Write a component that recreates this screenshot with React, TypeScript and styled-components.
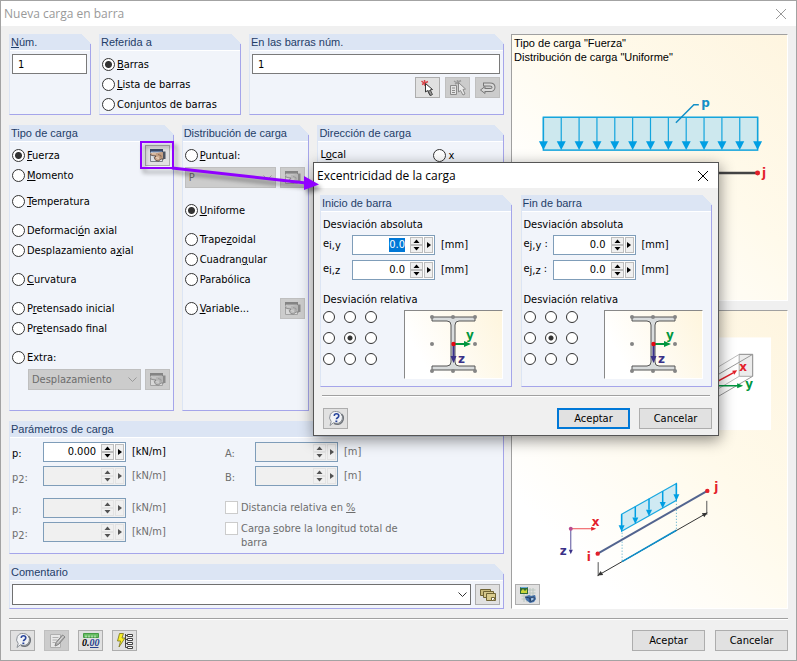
import React from 'react';
import styled, { createGlobalStyle, css } from 'styled-components';

const ui = '"DejaVu Sans Condensed", "Noto Sans", sans-serif';
const arial = '"Liberation Sans", Arial, sans-serif';
const segoe = '"Open Sans", "Noto Sans", sans-serif';

const Global = createGlobalStyle`
  * { box-sizing: border-box; }
  body { margin: 0; background: #f0f0f0; font: 11px/14px ${ui}; color: #000; }
  button, input, select { font: inherit; color: inherit; margin: 0; }
`;

const Page = styled.div`
  position: relative;
  display: flex;
  flex-direction: column;
  min-height: 100vh;
  border: 1px solid #a3a3a3;
  background: #f0f0f0;
`;

const TitleBar = styled.header<{ $active?: boolean }>`
  display: flex;
  align-items: center;
  justify-content: space-between;
  height: 25px;
  padding: 0 9px 0 3px;
  background: #fff;
  color: ${p => (p.$active ? '#000' : '#999')};
  font: 12px/16px ${segoe};
`;

const TitleText = styled.h1`
  margin: 0;
  font: inherit;
`;

const CloseButton = styled.button`
  display: flex;
  padding: 0;
  border: 0;
  background: none;
`;

const Main = styled.main`
  display: grid;
  grid-template-columns: minmax(0, 495fr) minmax(0, 277fr);
  gap: 7px;
  padding: 8px 8px 0;
`;

const Left = styled.div`
  display: flex;
  flex-direction: column;
  gap: 10px;
`;

const TopRow = styled.div`
  display: grid;
  grid-template-columns: 82fr 142fr 255fr;
  gap: 8px;
`;

const LoadRow = styled.div`
  display: grid;
  grid-template-columns: 165fr 128fr 187fr;
  gap: 8px;
`;

const GroupBox = styled.fieldset`
  position: relative;
  display: flex;
  flex-direction: column;
  min-width: 0;
  margin: 0;
  padding: 0;
  border: 0;
  border-left: 1px solid #dce5f4;
  border-bottom: 1px solid #a5a5ea;
  background: #f1f4fa;
  &::after {
    content: '';
    position: absolute;
    top: 10px;
    right: 0;
    bottom: 0;
    width: 1px;
    background: #a5a5ea;
  }
`;

const GroupHead = styled.div`
  height: 17px;
  padding-left: 1px;
  border-bottom: 1px solid #fff;
  background: linear-gradient(225deg, #f0f0f0 7px, #dce5f4 7px);
  color: #1f3d68;
  font: 11px/16px ${arial};
  white-space: nowrap;
`;

const GroupBody = styled.div<{ $minHeight?: number }>`
  display: flex;
  flex-direction: column;
  padding: 3px 4px 0 2px;
  min-height: ${p => p.$minHeight ?? 0}px;
`;

const TextBox = styled.input`
  width: 100%;
  height: 20px;
  padding: 0 5px;
  border: 1px solid #7a7a7a;
  background: #fff;
`;

const ButtonRow = styled.div`
  display: flex;
  justify-content: flex-end;
  gap: 5px;
  margin-top: 3px;
`;

const IconButton = styled.button<{ $end?: boolean }>`
  display: flex;
  flex: none;
  align-items: center;
  justify-content: center;
  width: 25px;
  height: 21px;
  padding: 0;
  border: 1px solid #adadad;
  background: #e1e1e1;
  ${p => p.$end && css`margin-left: auto;`}
  &:disabled { background: #cccccc; border-color: #bfbfbf; }
  &:disabled svg { filter: grayscale(1); opacity: 0.55; }
`;

const PushButton = styled.button<{ $default?: boolean }>`
  width: 73px;
  height: 21px;
  padding: 0;
  border: ${p => (p.$default ? '2px solid #0078d7' : '1px solid #adadad')};
  background: #e1e1e1;
`;

const RadioGroup = styled.div<{ $gap?: number }>`
  display: flex;
  flex-direction: column;
  margin-top: ${p => p.$gap ?? 0}px;
`;

const RadioRow = styled.div`
  display: flex;
  align-items: center;
  height: 20px;
`;

const RadioLabel = styled.label`
  display: flex;
  align-items: center;
  gap: 2px;
  white-space: nowrap;
  & > span { padding-top: 2px; }
`;

const Dot = styled.input<{ $small?: boolean }>`
  appearance: none;
  flex: none;
  width: ${p => (p.$small ? 12 : 13)}px;
  height: ${p => (p.$small ? 12 : 13)}px;
  border: 1px solid #333;
  border-radius: 50%;
  background: #fff;
  &:checked {
    background: radial-gradient(circle, #333 ${p => (p.$small ? 2 : 3)}px, #fff ${p => (p.$small ? 3 : 4)}px);
  }
`;

const SelectRow = styled.div<{ $indent?: boolean; $top: number }>`
  display: flex;
  align-items: center;
  gap: 4px;
  margin-top: ${p => p.$top}px;
  padding-left: ${p => (p.$indent ? 16 : 0)}px;
`;

const SelectWrap = styled.div`
  position: relative;
  flex: 1;
  min-width: 0;
  & > svg { position: absolute; right: 4px; top: 7px; pointer-events: none; }
`;

const Select = styled.select`
  appearance: none;
  display: block;
  width: 100%;
  height: 21px;
  padding: 0 3px;
  border: 1px solid #707070;
  border-radius: 0;
  background: #fff;
  &:disabled { border-color: #bfbfbf; background: #ccc; color: #6d6d6d; opacity: 1; }
`;

const Direction = styled.div`
  display: grid;
  grid-template-columns: 113px 1fr;
  align-items: center;
  height: 20px;
`;

const ParamGrid = styled.div`
  display: grid;
  grid-template-columns: 31px 83px 99px 30px 83px 1fr;
  gap: 4px 0;
  padding-top: 1px;
`;

const ParamSpacer = styled.div`
  grid-column: 1 / -1;
  height: 4px;
`;

const ParamLabel = styled.label<{ $off?: boolean }>`
  padding-top: 5px;
  height: 20px;
  color: ${p => (p.$off ? '#6d6d6d' : '#000')};
`;

const Unit = styled.span<{ $off?: boolean }>`
  padding: 3px 0 0 6px;
  color: ${p => (p.$off ? '#6d6d6d' : '#000')};
`;

const CheckLabel = styled.label`
  display: flex;
  align-items: flex-start;
  gap: 3px;
  max-width: 190px;
  color: #6d6d6d;
`;

const CheckStack = styled.div`
  grid-column: 4 / -1;
  grid-row: span 2;
  display: flex;
  flex-direction: column;
  gap: 7px;
  padding-top: 3px;
  height: 44px;
`;

const CheckBox = styled.input`
  appearance: none;
  flex: none;
  width: 13px;
  height: 13px;
  border: 1px solid #ccc;
  background: #fff;
`;

const Spin = styled.div<{ $off?: boolean }>`
  display: flex;
  width: 83px;
  height: 20px;
  padding: 1px;
  gap: 1px;
  border: 1px solid #7f9db9;
  background: ${p => (p.$off ? '#f0f0f0' : '#fff')};
`;

const SpinInput = styled.input`
  flex: 1;
  min-width: 0;
  padding: 0 4px 0 0;
  border: 0;
  outline: 0;
  background: none;
  text-align: right;
  &::selection { background: #0078d7; color: #fff; }
`;

const SpinPair = styled.div`
  display: flex;
  flex-direction: column;
  width: 13px;
`;

const SpinButton = styled.button<{ $side?: boolean }>`
  display: flex;
  align-items: center;
  justify-content: center;
  flex: ${p => (p.$side ? '0 0 9px' : '1')};
  padding: 0;
  border: 1px solid #bdbdbd;
  background: #f0f0f0;
  &:disabled { border-color: #ddd; opacity: 0.65; }
`;

const Previews = styled.div`
  display: grid;
  grid-template-rows: 267fr 299fr;
  gap: 9px;
`;

const Preview = styled.section`
  position: relative;
  display: flex;
  flex-direction: column;
  min-height: 0;
  border: 1px solid #fff;
  border-top-color: #a0a0a0;
  border-left-color: #a0a0a0;
  background: linear-gradient(45deg, #fff 20%, #fffaeb 60%, #fef5e0);
`;

const Caption = styled.p`
  margin: 0;
  padding: 1px 0 0 2px;
  font: 11px/14px ${arial};
`;

const Drawing = styled.svg`
  display: block;
  width: 100%;
  height: 0;
  flex: 1;
  min-height: 0;
`;

const PreviewTool = styled.div`
  position: absolute;
  left: 3px;
  bottom: 3px;
`;

const Rule = styled.hr<{ $top: number }>`
  height: 2px;
  margin: ${p => p.$top}px 8px 0;
  border: 0;
  border-top: 1px solid #a0a0a0;
  border-bottom: 1px solid #fff;
`;

const Footer = styled.footer`
  display: flex;
  justify-content: space-between;
  padding: 10px 8px 9px 9px;
`;

const Cluster = styled.div<{ $tools?: boolean }>`
  display: flex;
  gap: ${p => (p.$tools ? 9 : 10)}px;
`;

const Dialog = styled.div`
  position: absolute;
  left: 312px;
  top: 161px;
  width: 406px;
  border: 1px solid #555;
  background: #f0f0f0;
  box-shadow: 1px 4px 14px rgba(0, 0, 0, 0.45);
`;

const DialogMain = styled.div`
  display: grid;
  grid-template-columns: 1fr 1fr;
  gap: 9px;
  padding: 7px 6px 0;
`;

const Heading = styled.p`
  margin: 0;
  padding: 3px 0 2px;
`;

const OffsetGrid = styled.div`
  display: grid;
  grid-template-columns: 29px 83px 1fr;
  row-gap: 5px;
  padding-top: 1px;
  margin-bottom: 10px;
`;

const OffsetLabel = styled.label`
  padding-top: 2px;
  white-space: nowrap;
`;

const Sub = styled.span`
  position: relative;
  top: 2px;
`;

const RelRow = styled.div`
  display: flex;
  justify-content: space-between;
  padding: 1px 5px 7px 0;
`;

const Nine = styled.div`
  display: grid;
  grid-template-columns: repeat(3, 12px);
  grid-auto-rows: 12px;
  gap: 9px;
  padding-top: 1px;
`;

const SectionPicture = styled.div`
  width: 99px;
  height: 69px;
  border: 1px solid #fff;
  border-top-color: #888;
  border-left-color: #888;
  background: linear-gradient(60deg, #fff 20%, #fef5dd);
`;

const DialogFooter = styled.footer`
  display: flex;
  justify-content: space-between;
  padding: 11px 6px 6px 9px;
`;

const Pointer = styled.svg`
  position: absolute;
  left: 135px;
  top: 137px;
  pointer-events: none;
  filter: drop-shadow(3px 4px 2px rgba(0, 0, 0, 0.4));
`;

const CloseIcon = ({ color }: { color: string }) => (
  <svg width="12" height="12" viewBox="0 0 12 12" aria-hidden="true">
    <path d="M1 1l10 10M11 1L1 11" stroke={color} fill="none" />
  </svg>
);

const Chevron = ({ color }: { color: string }) => (
  <svg width="9" height="7" viewBox="0 0 9 7" aria-hidden="true">
    <path d="M0.5 1.5l4 4 4-4" stroke={color} fill="none" />
  </svg>
);

const HandIcon = () => (
  <svg width="17" height="15" viewBox="0 0 17 15" aria-hidden="true">
    <path d="M1.500 1.500h12v12h-12z" fill="#dfe3e7" stroke="#7b828a" />
    <path d="M1 1h13v3H1z" fill="#3b4b68" />
    <path d="M2 4h11" stroke="#8fb0dc" />
    <path d="M1 5.500l3.500-1 4 .3L12 4l3 .5v6l-3 .5-2.500 2-3-.5L6 11l-1-1.500L7 8 2 7z" fill="#c39f82" />
    <path d="M1 6.500l2 1 4 .6-1.800 1.400L6 11.300l1 1.300 2.500.4 2.500-2h3" fill="none" stroke="#4e3f38" strokeWidth="0.800" />
    <path d="M7 9.500l3-.5M7.500 11l2.500-.5M3 5.800l4 .2" stroke="#f3dfcb" strokeWidth="0.800" />
    <path d="M9 6.500l3 1v2" fill="none" stroke="#7d5f4c" strokeWidth="0.800" />
    <path d="M14 3.500h2.500V11H14z" fill="#4f5560" />
  </svg>
);

const PickIcon = () => (
  <svg width="18" height="18" viewBox="0 0 18 18" aria-hidden="true">
    <path d="M2.500 2l6 5M9 2.500L3 5.500M5.500 1l.5 6" stroke="#d8474c" strokeWidth="1.500" />
    <path d="M6.500 4.500v8.500l2-1.500 2.500 5 2-1-2-4.500 2.500-.5z" fill="#fff" stroke="#333" />
    <path d="M9 12l2.500 4.500 2-1-2-4z" fill="#999" stroke="#444" strokeWidth="0.800" />
  </svg>
);

const PickListIcon = () => (
  <svg width="20" height="18" viewBox="0 0 20 18" aria-hidden="true">
    <path d="M6 2l6 4M13 1.500L7 5M9.500 1v4" stroke="#777" strokeWidth="1.500" />
    <path d="M2.500 6.500h6v9h-6z" fill="#f7f7f7" stroke="#555" />
    <path d="M4 9h3M4 11.500h3M4 13.500h3" stroke="#555" />
    <path d="M10.500 3.500V13l2-1.500 2.500 4.500 2-1-2-4.500 2.500-.5z" fill="#fff" stroke="#555" />
  </svg>
);

const ReturnIcon = () => (
  <svg width="18" height="14" viewBox="0 0 18 14" aria-hidden="true">
    <path d="M4 3.500h7q3.500 0 3.500 2.800T11 9H5" fill="none" stroke="#333" strokeWidth="4" />
    <path d="M6 5.500L1.500 9 6 12.500z" fill="#ddd" stroke="#333" />
    <path d="M5 3.500h6q3.500 0 3.500 2.800T11 9H5" fill="none" stroke="#e5e5e5" strokeWidth="2" />
  </svg>
);

const HelpIcon = () => (
  <svg width="18" height="18" viewBox="0 0 18 18" aria-hidden="true">
    <path d="M9.500 1.500a6 6 0 1 1-3 11.200L3 15.500l1.200-4A6 6 0 0 1 9.500 1.500z" fill="#f1f3f6" stroke="#8d9298" />
    <path d="M14.500 4a6 6 0 0 1-7.500 9.300" fill="none" stroke="#6e737a" strokeWidth="1.500" />
    <path d="M7.200 5.800q.2-2 2.300-2t2.300 2q0 1.200-1.200 1.900T9.400 9.300" fill="none" stroke="#27439b" strokeWidth="1.600" />
    <path d="M8.400 10.500h1.900v1.700H8.400z" fill="#27439b" />
  </svg>
);

const NoteIcon = () => (
  <svg width="18" height="18" viewBox="0 0 18 18" aria-hidden="true">
    <path d="M2.500 2.500h10v13h-10z" fill="#fff" stroke="#999" />
    <path d="M4.500 5.500h6M4.500 8h5M4.500 10.500h3" stroke="#999" />
    <path d="M7 14l1-3.500L14.500 3l2.500 2L10.500 12.500z" fill="#999" stroke="#444" />
    <path d="M9.500 11L15.500 4" stroke="#eee" />
  </svg>
);

const DecimalsIcon = () => (
  <svg width="20" height="18" viewBox="0 0 20 18" aria-hidden="true">
    <path d="M2.500 1.500h15v4h-15z" fill="#67bd62" stroke="#459b45" />
    <path d="M5 3.500v2M8 3.500v2M11 3.500v2M14 3.500v2" stroke="#dff3dc" />
    <text x="1" y="14" fontFamily="Liberation Serif" fontSize="10" fontWeight="700" fontStyle="italic">0.<tspan fill="#26418f">00</tspan></text>
    <path d="M9 15.500h8.500" stroke="#26418f" />
  </svg>
);

const FlashTreeIcon = () => (
  <svg width="20" height="18" viewBox="0 0 20 18" aria-hidden="true">
    <path d="M4.500 1.500h4L7 6h3l-6 9 1.500-6h-3z" fill="#f7ee25" stroke="#77721a" strokeWidth="0.800" />
    <path d="M10.500 2v13.500M10.500 3.500h2M10.500 7.500h2M10.500 11.500h2M10.500 15.500h2" stroke="#444" fill="none" />
    <path d="M12.500 2.500h5v2h-5zM12.500 6.500h5v2h-5zM12.500 10.500h5v2h-5zM12.500 14.500h5v2h-5z" fill="#fff" stroke="#444" />
  </svg>
);

const CardsIcon = () => (
  <svg width="18" height="14" viewBox="0 0 18 14" aria-hidden="true">
    <path d="M1.500 1.500h10v6h-10z" fill="#c9ba7c" stroke="#6f6334" />
    <path d="M4.500 3.500h10v6h-10z" fill="#d6c88c" stroke="#6f6334" />
    <path d="M7.500 5.500h9v7h-9z" fill="#d9cb8e" stroke="#6f6334" />
    <path d="M12.500 9.500h3v1.500l-1.500 1.500h-1.500z" fill="#fff" stroke="#6f6334" />
  </svg>
);

const RenderIcon = () => (
  <svg width="18" height="18" viewBox="0 0 18 18" aria-hidden="true">
    <path d="M2.500 4h14M2.500 7h14M5 2v14M8 2v14M11 2v14M14 2v14M2.500 10h14M2.500 13h14" stroke="#b9c6bf" />
    <path d="M1 1h8v7H1z" fill="#2f6b3a" />
    <path d="M2 7V5l2-2 2 2 2-2v4z" fill="#c9d63a" />
    <path d="M1.500 1.500h7" stroke="#69a9dd" />
    <path d="M6 11l4-2 2 1 4-1 1 4-2 3-4 1-4-3z" fill="#4370ab" />
    <path d="M11 12l4-1v3l-3 1.500z" fill="#9fc2e8" stroke="#1d3557" strokeWidth="0.800" />
    <path d="M6 11l5 1v4" fill="none" stroke="#1d3557" strokeWidth="0.800" />
  </svg>
);

const Letter = styled.text`
  font-family: "DejaVu Sans", sans-serif;
  font-weight: 700;
  font-size: 12px;
`;

/* Underlines the accelerator character found at the given index. */
const Mnemonic = ({ text, at }: { text: string; at?: number }) =>
  at === undefined ? <span>{text}</span> : (
    <span>{text.slice(0, at)}<u>{text[at]}</u>{text.slice(at + 1)}</span>
  );

type RadioProps = { name: string; text: string; at?: number; checked?: boolean };

const Radio = ({ name, text, at, checked }: RadioProps) => (
  <RadioLabel>
    <Dot type="radio" name={name} defaultChecked={checked} />
    <Mnemonic text={text} at={at} />
  </RadioLabel>
);

const Group = ({ title, at, minHeight, children }: { title: string; at?: number; minHeight?: number; children: React.ReactNode }) => (
  <GroupBox aria-label={title}>
    <GroupHead><Mnemonic text={title} at={at} /></GroupHead>
    <GroupBody $minHeight={minHeight}>{children}</GroupBody>
  </GroupBox>
);

const SpinBox = ({ id, value = '', off, selected }: { id: string; value?: string; off?: boolean; selected?: boolean }) => {
  const ref = React.useRef<HTMLInputElement>(null);
  React.useEffect(() => {
    if (selected && ref.current) {
      ref.current.focus();
      ref.current.select();
    }
  }, [selected]);
  return (
    <Spin $off={off}>
      <SpinInput id={id} ref={ref} type="text" defaultValue={value} disabled={off} />
      <SpinPair>
        <SpinButton type="button" disabled={off} aria-label="Aumentar">
          <svg width="7" height="4" viewBox="0 0 7 4"><path d="M0.500 4h6l-3-3.500z" /></svg>
        </SpinButton>
        <SpinButton type="button" disabled={off} aria-label="Disminuir">
          <svg width="7" height="4" viewBox="0 0 7 4"><path d="M0.500 0h6l-3 3.500z" /></svg>
        </SpinButton>
      </SpinPair>
      <SpinButton $side type="button" disabled={off} aria-label="Opciones">
        <svg width="4" height="6" viewBox="0 0 4 6"><path d="M0 0v6l4-3z" /></svg>
      </SpinButton>
    </Spin>
  );
};

const HandButton = ({ label, disabled = true }: { label: string; disabled?: boolean }) => (
  <IconButton $end type="button" disabled={disabled} aria-label={label}><HandIcon /></IconButton>
);

const ISection = () => (
  <svg width="97" height="67" viewBox="0 0 97 67" aria-hidden="true">
    <path d="M27 6h43v4H54q-4 0-4 4v37q0 4 4 4h16v4H27v-4h15q4 0 4-4V14q0-4-4-4H27z" fill="#d8dbdc" stroke="#555" />
    <g fill="#858585">
      {[[27, 6], [48, 6], [70, 6], [27, 33], [70, 33], [27, 60], [48, 60], [70, 60]].map(([x, y]) => (
        <circle key={`${x}-${y}`} cx={x} cy={y} r="2" />
      ))}
    </g>
    <path d="M48.500 33v14" stroke="#3a3188" strokeWidth="2" />
    <path d="M45.500 45h6l-3 7z" fill="#3a3188" />
    <path d="M48 33h13" stroke="#009640" strokeWidth="2" />
    <path d="M59 30l7 3-7 3z" fill="#009640" />
    <circle cx="48.500" cy="33" r="2.200" fill="#e30613" />
    <Letter x="61" y="28" fill="#009640">y</Letter>
    <Letter x="53" y="52" fill="#3a3188">z</Letter>
  </svg>
);

const OffsetGroup = ({ title, node, colon, selected }: { title: string; node: string; colon: string; selected?: boolean }) => (
  <Group title={title}>
    <Heading>Desviación absoluta</Heading>
    <OffsetGrid>
      {['y', 'z'].map(axis => (
        <React.Fragment key={axis}>
          <OffsetLabel htmlFor={`e${node}${axis}`}>e<Sub>{node},{axis}</Sub>{colon}</OffsetLabel>
          <SpinBox id={`e${node}${axis}`} value="0.0" selected={selected && axis === 'y'} />
          <Unit>[mm]</Unit>
        </React.Fragment>
      ))}
    </OffsetGrid>
    <Heading>Desviación relativa</Heading>
    <RelRow>
      <Nine>
        {Array.from({ length: 9 }, (_, i) => (
          <Dot key={i} $small type="radio" name={`rel-${node}`} defaultChecked={i === 4} aria-label={`Posición ${i + 1}`} />
        ))}
      </Nine>
      <SectionPicture><ISection /></SectionPicture>
    </RelRow>
  </Group>
);

const LoadDrawing = () => (
  <Drawing viewBox="512 64 276 236" preserveAspectRatio="xMidYMid meet" aria-hidden="true">
    <rect x="543.500" y="117" width="215" height="33" fill="#cde8ee" stroke="#12a4dd" strokeWidth="1.500" />
    {Array.from({ length: 13 }, (_, i) => {
      const x = 543.5 + (i * 215) / 12;
      return (
        <g key={i}>
          <path d={`M${x} 117v25`} stroke="#12a4dd" strokeWidth="1.200" />
          <path d={`M${x - 4.5} 141h9l-4.500 9z`} fill="#009fe3" />
        </g>
      );
    })}
    <path d="M676.500 122.500l18-18h5" fill="none" stroke="#128fc7" strokeWidth="1.500" />
    <Letter x="702" y="107" fill="#128fc7">p</Letter>
    <path d="M543 173h215" stroke="#444" strokeWidth="2.500" />
    <circle cx="543.500" cy="173" r="2.500" fill="#e3202a" />
    <circle cx="758.500" cy="173" r="2.500" fill="#e3202a" />
    <Letter x="763" y="177" fill="#e3202a">j</Letter>
  </Drawing>
);

const MemberDrawing = () => (
  <Drawing viewBox="512 311 276 297" preserveAspectRatio="xMidYMid meet" aria-hidden="true">
    <rect x="600" y="337" width="172" height="93" fill="#fff" />
    <path d="M740 354h13.500v22H740z" fill="#ececec" stroke="#aaa" />
    <path d="M740 354l-40 24M740 376l-40 24" stroke="#bbb" fill="none" />
    <path d="M753.500 354l-53 31M753.500 376l-53 31M740 354h13.500v22" stroke="#999" fill="none" />
    <path d="M700 391l34-18.500" stroke="#e3202a" strokeWidth="1.500" />
    <path d="M738 370l-5 .5 2 4z" fill="#e3202a" />
    <Letter x="740" y="371" fill="#e3202a">x</Letter>
    <path d="M700 385.500h39" stroke="#009640" strokeWidth="1.500" />
    <path d="M738 383l6 2.500-6 2.500z" fill="#009640" />
    <Letter x="746" y="388" fill="#009640">y</Letter>

    <path d="M622 514.500L677 483.500V500.500L622 531.500z" fill="#cfeaf3" stroke="#1aa8e0" strokeWidth="1.200" />
    {[0, 1, 2, 3, 4].map(i => {
      const x = 622 + i * 13.75;
      const y = 531.5 - i * 7.75;
      return (
        <g key={i}>
          <path d={`M${x} ${y - 17}v11`} stroke="#009fe3" strokeWidth="1.500" />
          <path d={`M${x - 3} ${y - 6}h6l-3 6.500z`} fill="#009fe3" />
        </g>
      );
    })}
    <path d="M622.500 533v29M677 501v29" stroke="#4aa9c9" strokeDasharray="1 2" />
    <path d="M598 554L708 491" stroke="#52648f" strokeWidth="2" />
    <circle cx="598" cy="554" r="2.200" fill="#e3202a" />
    <circle cx="708" cy="491" r="2.200" fill="#e3202a" />
    <path d="M598 576L708 513" stroke="#333" />
    <path d="M622.500 562L677 530.500" stroke="#0e8fcb" strokeWidth="1.500" />
    <path d="M598.500 562.500v14M707.500 501v14" stroke="#555" />
    <path d="M598 576l3-4.500 2.500 4zM708 513l-5.500.5 2.500 4z" fill="#333" />
    <path d="M571 529h21" stroke="#ee4c50" />
    <path d="M591.500 527l5 2-5 2z" fill="#e3202a" />
    <path d="M571 529v21" stroke="#574f9b" />
    <path d="M569 550l2 4.500 2-4.500z" fill="#3a3188" />
    <circle cx="571" cy="529" r="2" fill="#b94c90" />
    <Letter x="592" y="526" fill="#e3202a">x</Letter>
    <Letter x="560" y="555" fill="#3a3188">z</Letter>
    <Letter x="587" y="561" fill="#e3202a">i</Letter>
    <Letter x="715" y="491" fill="#e3202a">j</Letter>
  </Drawing>
);

const App = () => (
  <>
    <Global />
    <Page>
      <TitleBar>
        <TitleText>Nueva carga en barra</TitleText>
        <CloseButton type="button" aria-label="Cerrar"><CloseIcon color="#999" /></CloseButton>
      </TitleBar>
      <Main>
        <Left>
          <TopRow>
            <Group title="Núm." at={0}>
              <TextBox type="text" defaultValue="1" aria-label="Núm." />
            </Group>
            <Group title="Referida a" minHeight={63}>
              <RadioRow><Radio name="ref" text="Barras" at={0} checked /></RadioRow>
              <RadioRow><Radio name="ref" text="Lista de barras" at={0} /></RadioRow>
              <RadioRow><Radio name="ref" text="Conjuntos de barras" at={3} /></RadioRow>
            </Group>
            <Group title="En las barras núm.">
              <TextBox type="text" defaultValue="1" aria-label="En las barras núm." />
              <ButtonRow>
                <IconButton type="button" aria-label="Seleccionar"><PickIcon /></IconButton>
                <IconButton type="button" disabled aria-label="Seleccionar de la lista"><PickListIcon /></IconButton>
                <IconButton type="button" disabled aria-label="Invertir"><ReturnIcon /></IconButton>
              </ButtonRow>
            </Group>
          </TopRow>
          <LoadRow>
            <Group title="Tipo de carga" minHeight={268}>
              <RadioGroup>
                <RadioRow>
                  <Radio name="tipo" text="Fuerza" at={0} checked />
                  <HandButton label="Excentricidad" disabled={false} />
                </RadioRow>
                <RadioRow><Radio name="tipo" text="Momento" at={0} /></RadioRow>
              </RadioGroup>
              <RadioGroup $gap={6}>
                <RadioRow><Radio name="tipo" text="Temperatura" at={0} /></RadioRow>
              </RadioGroup>
              <RadioGroup $gap={9}>
                <RadioRow><Radio name="tipo" text="Deformación axial" at={9} /></RadioRow>
                <RadioRow><Radio name="tipo" text="Desplazamiento axial" at={16} /></RadioRow>
              </RadioGroup>
              <RadioGroup $gap={9}>
                <RadioRow><Radio name="tipo" text="Curvatura" at={0} /></RadioRow>
              </RadioGroup>
              <RadioGroup $gap={9}>
                <RadioRow><Radio name="tipo" text="Pretensado inicial" at={1} /></RadioRow>
                <RadioRow><Radio name="tipo" text="Pretensado final" at={2} /></RadioRow>
              </RadioGroup>
              <RadioGroup $gap={9}>
                <RadioRow><Radio name="tipo" text="Extra:" /></RadioRow>
              </RadioGroup>
              <SelectRow $indent $top={2}>
                <SelectWrap>
                  <Select disabled aria-label="Extra"><option>Desplazamiento</option></Select>
                  <Chevron color="#999" />
                </SelectWrap>
                <HandButton label="Editar extra" />
              </SelectRow>
            </Group>
            <Group title="Distribución de carga">
              <RadioGroup>
                <RadioRow><Radio name="dist" text="Puntual:" at={0} /></RadioRow>
              </RadioGroup>
              <SelectRow $top={2}>
                <SelectWrap>
                  <Select disabled aria-label="Puntual"><option>P</option></Select>
                  <Chevron color="#999" />
                </SelectWrap>
                <HandButton label="Editar carga puntual" />
              </SelectRow>
              <RadioGroup $gap={12}>
                <RadioRow><Radio name="dist" text="Uniforme" at={0} checked /></RadioRow>
              </RadioGroup>
              <RadioGroup $gap={9}>
                <RadioRow><Radio name="dist" text="Trapezoidal" at={5} /></RadioRow>
                <RadioRow><Radio name="dist" text="Cuadrangular" at={7} /></RadioRow>
                <RadioRow><Radio name="dist" text="Parabólica" /></RadioRow>
              </RadioGroup>
              <RadioGroup $gap={9}>
                <RadioRow>
                  <Radio name="dist" text="Variable..." at={0} />
                  <HandButton label="Editar carga variable" />
                </RadioRow>
              </RadioGroup>
            </Group>
            <Group title="Dirección de carga">
              <Direction>
                <Mnemonic text="Local" at={1} />
                <Radio name="dir" text="x" />
              </Direction>
            </Group>
          </LoadRow>
          <Group title="Parámetros de carga" minHeight={115}>
            <ParamGrid>
              <ParamLabel htmlFor="p">p:</ParamLabel>
              <SpinBox id="p" value="0.000" />
              <Unit>[kN/m]</Unit>
              <ParamLabel $off htmlFor="a">A:</ParamLabel>
              <SpinBox id="a" off />
              <Unit $off>[m]</Unit>
              <ParamLabel $off htmlFor="p2">p<Sub>2</Sub>:</ParamLabel>
              <SpinBox id="p2" off />
              <Unit $off>[kN/m]</Unit>
              <ParamLabel $off htmlFor="b">B:</ParamLabel>
              <SpinBox id="b" off />
              <Unit $off>[m]</Unit>
              <ParamSpacer />
              <ParamLabel $off htmlFor="pb">p:</ParamLabel>
              <SpinBox id="pb" off />
              <Unit $off>[kN/m]</Unit>
              <CheckStack>
                <CheckLabel><CheckBox type="checkbox" disabled /><Mnemonic text="Distancia relativa en %" at={22} /></CheckLabel>
                <CheckLabel><CheckBox type="checkbox" disabled /><Mnemonic text="Carga sobre la longitud total de barra" at={6} /></CheckLabel>
              </CheckStack>
              <ParamLabel $off htmlFor="p2b">p<Sub>2</Sub>:</ParamLabel>
              <SpinBox id="p2b" off />
              <Unit $off>[kN/m]</Unit>
            </ParamGrid>
          </Group>
          <Group title="Comentario" minHeight={27}>
            <SelectRow $top={0}>
              <SelectWrap>
                <Select aria-label="Comentario"><option> </option></Select>
                <Chevron color="#333" />
              </SelectWrap>
              <IconButton type="button" aria-label="Comentarios guardados"><CardsIcon /></IconButton>
            </SelectRow>
          </Group>
        </Left>
        <Previews>
          <Preview>
            <Caption>Tipo de carga "Fuerza"<br />Distribución de carga "Uniforme"</Caption>
            <LoadDrawing />
          </Preview>
          <Preview>
            <MemberDrawing />
            <PreviewTool>
              <IconButton type="button" aria-label="Cambiar vista"><RenderIcon /></IconButton>
            </PreviewTool>
          </Preview>
        </Previews>
      </Main>
      <Rule $top={9} />
      <Footer>
        <Cluster $tools>
          <IconButton type="button" aria-label="Ayuda"><HelpIcon /></IconButton>
          <IconButton type="button" disabled aria-label="Editar"><NoteIcon /></IconButton>
          <IconButton type="button" aria-label="Unidades y decimales"><DecimalsIcon /></IconButton>
          <IconButton type="button" aria-label="Casos de carga"><FlashTreeIcon /></IconButton>
        </Cluster>
        <Cluster>
          <PushButton type="button">Aceptar</PushButton>
          <PushButton type="button">Cancelar</PushButton>
        </Cluster>
      </Footer>

      <Dialog role="dialog" aria-label="Excentricidad de la carga">
        <TitleBar $active>
          <TitleText>Excentricidad de la carga</TitleText>
          <CloseButton type="button" aria-label="Cerrar"><CloseIcon color="#000" /></CloseButton>
        </TitleBar>
        <DialogMain>
          <OffsetGroup title="Inicio de barra" node="i" colon="" selected />
          <OffsetGroup title="Fin de barra" node="j" colon=" :" />
        </DialogMain>
        <Rule $top={8} />
        <DialogFooter>
          <IconButton type="button" aria-label="Ayuda"><HelpIcon /></IconButton>
          <Cluster $tools>
            <PushButton $default type="button">Aceptar</PushButton>
            <PushButton type="button">Cancelar</PushButton>
          </Cluster>
        </DialogFooter>
      </Dialog>

      <Pointer width="190" height="60" viewBox="136 138 190 60" aria-hidden="true">
        <rect x="141" y="142" width="32" height="26" fill="none" stroke="#9000ff" strokeWidth="2" />
        <path d="M172 168L306 183" stroke="#9000ff" strokeWidth="3" />
        <path d="M304 176l15 8.500-15 5.500z" fill="#9000ff" />
      </Pointer>
    </Page>
  </>
);

export default App;
